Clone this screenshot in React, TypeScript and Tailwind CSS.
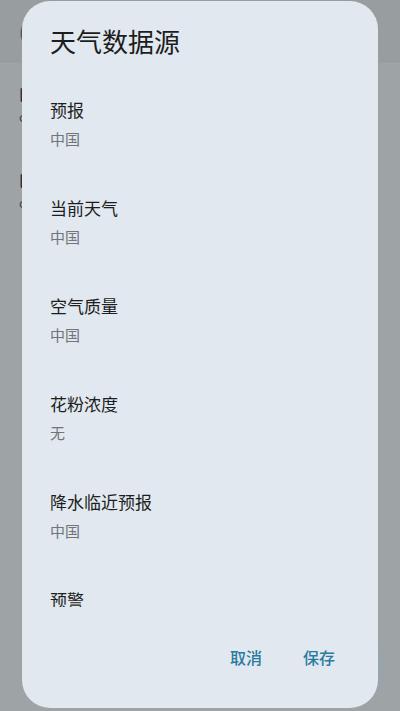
import React from "react";

type Source = { label: string; value: string | null };

const sources: Source[] = [
  { label: "预报", value: "中国" },
  { label: "当前天气", value: "中国" },
  { label: "空气质量", value: "中国" },
  { label: "花粉浓度", value: "无" },
  { label: "降水临近预报", value: "中国" },
  { label: "预警", value: "中国" },
];

const font = { fontFamily: '"Noto Sans CJK SC", "Noto Sans", sans-serif' };

export default function App() {
  return (
    <div
      className="relative w-[400px] h-[711px] overflow-hidden bg-[#9ea3a6]"
      style={font}
    >
      {/* ===== dimmed page behind ===== */}
      <div className="flex flex-col h-full">
        <div className="h-[62px] bg-[#989da0] border-b border-[#93989b] pl-[19px] pt-[18px] text-[18px] text-[#4a4d50]">
          (
        </div>
        <div className="pl-[19px] pt-[20px] flex flex-col text-[#2a2d30]">
          <span className="text-[17px] leading-[26px]">li</span>
          <span className="text-[13px] leading-[18px] text-[#44474a]">c</span>
        </div>
        <div className="pl-[19px] pt-[42px] flex flex-col text-[#2a2d30]">
          <span className="text-[17px] leading-[26px]">l</span>
          <span className="text-[13px] leading-[18px] text-[#44474a]">c</span>
        </div>
        <div className="mt-auto mb-[20px] ml-auto mr-[18px] w-[60px] h-[52px] rounded-[14px] border border-[#86a9bd]" />
      </div>

      {/* ===== dialog ===== */}
      <div className="absolute left-[22px] top-[1px] w-[356px] h-[707px] rounded-[28px] bg-[#e1e8ef] flex flex-col">
        <h1 className="h-[73px] pl-[28px] pt-[23px] text-[26px] leading-[34px] text-[#1c1d20] font-normal">
          天气数据源
        </h1>

        <div className="h-[533px] overflow-hidden">
          {sources.map((s) => (
            <div key={s.label} className="h-[98px] pl-[28px] pt-[24px] flex flex-col">
              <span className="text-[17px] leading-[24px] text-[#1d1e21]">{s.label}</span>
              {s.value && (
                <span className="mt-[6px] text-[15px] leading-[21px] text-[#707579]">{s.value}</span>
              )}
            </div>
          ))}
        </div>

        <div className="flex justify-end gap-[41px] pr-[43px] pt-[38px]">
          <button className="text-[16px] leading-[24px] font-medium text-[#2a7aa0]">取消</button>
          <button className="text-[16px] leading-[24px] font-medium text-[#2a7aa0]">保存</button>
        </div>
      </div>
    </div>
  );
}
